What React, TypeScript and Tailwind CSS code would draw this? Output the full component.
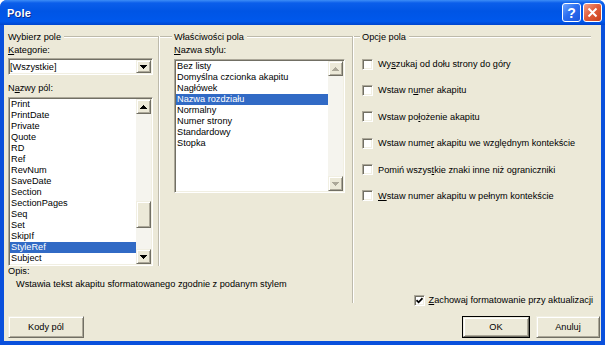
const sunken =
  "border border-t-[#ACA899] border-l-[#ACA899] border-b-white border-r-white shadow-[inset_1px_1px_0_#716F64,inset_-1px_-1px_0_#F1EFE2]";
const raised =
  "border border-t-[#F1EFE2] border-l-[#F1EFE2] border-b-[#716F64] border-r-[#716F64] shadow-[inset_1px_1px_0_#ffffff,inset_-1px_-1px_0_#ACA899]";

const fields = [
  "Print",
  "PrintDate",
  "Private",
  "Quote",
  "RD",
  "Ref",
  "RevNum",
  "SaveDate",
  "Section",
  "SectionPages",
  "Seq",
  "Set",
  "SkipIf",
  "StyleRef",
  "Subject",
];

const styles = [
  "Bez listy",
  "Domyślna czcionka akapitu",
  "Nagłówek",
  "Nazwa rozdziału",
  "Normalny",
  "Numer strony",
  "Standardowy",
  "Stopka",
];

function Arrow({ up, disabled }: { up?: boolean; disabled?: boolean }) {
  return (
    <svg width="7" height="4" viewBox="0 0 7 4" shapeRendering="crispEdges">
      <path
        d={up ? "M3 0h1v1H3zM2 1h3v1H2zM1 2h5v1H1zM0 3h7v1H0z" : "M0 0h7v1H0zM1 1h5v1H1zM2 2h3v1H2zM3 3h1v1H3z"}
        fill={disabled ? "#ACA899" : "#000000"}
      />
    </svg>
  );
}

function ScrollBtn({ up, disabled }: { up?: boolean; disabled?: boolean }) {
  return (
    <div className={`flex h-[15px] w-[15px] shrink-0 items-center justify-center bg-[#ECE9D8] ${raised}`}>
      <Arrow up={up} disabled={disabled} />
    </div>
  );
}

function HLine({ className = "" }: { className?: string }) {
  return <div className={`h-[2px] border-t border-t-[#BDBAAB] border-b border-b-white ${className}`} />;
}

function VLine({ className = "" }: { className?: string }) {
  return <div className={`w-[2px] shrink-0 border-l border-l-[#BDBAAB] border-r border-r-white ${className}`} />;
}

function Check({ checked }: { checked?: boolean }) {
  return (
    <span className={`flex h-[11px] w-[11px] shrink-0 items-center justify-center bg-white ${sunken}`}>
      {checked && (
        <svg width="7" height="7" viewBox="0 0 7 7">
          <path d="M0.5 3.2 L2.6 5.3 L6.5 1.2" stroke="#000" strokeWidth="1.7" fill="none" />
        </svg>
      )}
    </span>
  );
}

function Btn({ children, w, def }: { children: React.ReactNode; w: string; def?: boolean }) {
  return (
    <div className={`${w} h-[22px] ${def ? "border border-black" : ""}`}>
      <div className={`flex h-full w-full items-center justify-center bg-[#ECE9D8] ${raised}`}>{children}</div>
    </div>
  );
}

function Option({ children }: { children: React.ReactNode }) {
  return (
    <div className="flex h-[12px] items-center gap-[5px]">
      <Check />
      <span>{children}</span>
    </div>
  );
}

export default function App() {
  return (
    <div className="h-[345px] w-[605px] overflow-hidden bg-white">
      <div className="flex h-full w-full flex-col rounded-t-[7px] bg-[#0A50DC] font-['Liberation_Sans',Arial,sans-serif] text-[9.2px] leading-[12px] text-black">
        {/* title bar */}
        <div className="flex h-[25px] shrink-0 items-center rounded-t-[7px] bg-[linear-gradient(180deg,#3D8DF7_0%,#0B5EEA_12%,#0055E5_45%,#0058EC_85%,#0045CE_100%)] pl-[7px] pr-[3px]">
          <span className="flex-1 text-[11px] font-bold tracking-[0.2px] text-white [text-shadow:1px_1px_0_#0A2A8A]">
            Pole
          </span>
          <div className="flex h-[19px] w-[19px] items-center justify-center rounded-[3px] border border-white bg-[linear-gradient(135deg,#6FA6FF_0%,#2D6FF0_45%,#1A55DC_100%)] text-[14px] font-bold leading-none text-white">
            ?
          </div>
          <div className="ml-[2px] flex h-[19px] w-[19px] items-center justify-center rounded-[3px] border border-white bg-[linear-gradient(135deg,#F4A088_0%,#E2603D_45%,#C7401C_100%)]">
            <svg width="11" height="11" viewBox="0 0 11 11">
              <path d="M1.5 1.5 L9.5 9.5 M9.5 1.5 L1.5 9.5" stroke="#fff" strokeWidth="2" />
            </svg>
          </div>
        </div>

        {/* body */}
        <div className="mx-[4px] mb-[4px] flex flex-1 flex-col bg-[#ECE9D8]">
          <div className="flex h-[281px]">
            <div className="flex w-[348px] flex-col pt-[6px]">
              <div className="flex h-[235px]">
                {/* Wybierz pole */}
                <div className="flex w-[154px] flex-col">
                  <div className="flex h-[12px] items-center pl-[4px]">
                    <span>Wybierz pole</span>
                    <HLine className="ml-[3px] flex-1" />
                  </div>
                  <div className="mt-[1px] h-[12px] pl-[4px]">
                    <u>K</u>ategorie:
                  </div>
                  <div className={`ml-[4px] mt-[2px] flex h-[17px] w-[145px] bg-white ${sunken}`}>
                    <div className="flex flex-1 items-center pl-[1px] pt-[1px]">[Wszystkie]</div>
                    <div className="py-[1px] pr-[1px]">
                      <div className={`flex h-full w-[15px] items-center justify-center bg-[#ECE9D8] ${raised}`}>
                        <Arrow />
                      </div>
                    </div>
                  </div>
                  <div className="mt-[7px] h-[12px] pl-[4px]">
                    N<u>a</u>zwy pól:
                  </div>
                  <div className={`ml-[4px] mt-[3px] flex h-[169px] w-[145px] bg-white p-[1px] ${sunken}`}>
                    <div className="flex flex-1 flex-col leading-[11px]">
                      {fields.map((f) => (
                        <div
                          key={f}
                          className={`h-[11px] pl-[1px] ${f === "StyleRef" ? "bg-[#316AC5] text-white" : ""}`}
                        >
                          {f}
                        </div>
                      ))}
                    </div>
                    <div className="flex w-[15px] flex-col bg-[#F5F4EE]">
                      <ScrollBtn up />
                      <div className="flex-1">
                        <div className="h-[87px]" />
                        <div className={`h-[27px] w-[15px] bg-[#ECE9D8] ${raised}`} />
                      </div>
                      <ScrollBtn />
                    </div>
                  </div>
                </div>

                <VLine className="mt-[5px]" />

                {/* Właściwości pola */}
                <div className="flex flex-1 flex-col">
                  <div className="flex h-[12px] items-center">
                    <HLine className="w-[12px]" />
                    <span className="ml-[2px]">Właściwości pola</span>
                    <HLine className="ml-[3px] flex-1" />
                  </div>
                  <div className="mt-[1px] h-[12px] pl-[14px]">
                    <u>N</u>azwa stylu:
                  </div>
                  <div className={`ml-[14px] mt-[3px] flex h-[134px] w-[171px] bg-white p-[1px] ${sunken}`}>
                    <div className="flex flex-1 flex-col leading-[11px]">
                      {styles.map((s) => (
                        <div
                          key={s}
                          className={`h-[11px] pl-[1px] ${s === "Nazwa rozdziału" ? "bg-[#316AC5] text-white" : ""}`}
                        >
                          {s}
                        </div>
                      ))}
                    </div>
                    <div className="flex w-[15px] flex-col bg-[#F5F4EE]">
                      <ScrollBtn up disabled />
                      <div className="flex-1" />
                      <ScrollBtn disabled />
                    </div>
                  </div>
                </div>
              </div>

              <div className="h-[11px] pl-[4px] leading-[11px]">Opis:</div>
              <div className="mt-[1px] h-[12px] pl-[12px]">
                Wstawia tekst akapitu sformatowanego zgodnie z podanym stylem
              </div>
            </div>

            <VLine className="mb-[3px] mt-[11px]" />

            {/* Opcje pola */}
            <div className="flex flex-1 flex-col pt-[6px]">
              <div className="flex h-[12px] items-center pr-[10px]">
                <HLine className="w-[6px]" />
                <span className="ml-[2px]">Opcje pola</span>
                <HLine className="ml-[3px] flex-1" />
              </div>
              <div className="mt-[15px] flex flex-col gap-[14.4px] pl-[8px]">
                <Option>
                  Wy<u>s</u>zukaj od dołu strony do góry
                </Option>
                <Option>
                  Wstaw n<u>u</u>mer akapitu
                </Option>
                <Option>
                  Wstaw po<u>ł</u>ożenie akapitu
                </Option>
                <Option>
                  Wstaw nume<u>r</u> akapitu we względnym kontekście
                </Option>
                <Option>
                  Pomiń wszys<u>t</u>kie znaki inne niż ograniczniki
                </Option>
                <Option>
                  <u>W</u>staw numer akapitu w pełnym kontekście
                </Option>
              </div>
              <div className="flex-1" />
              <div className="flex h-[12px] items-center justify-end gap-[4px] pr-[8px]">
                <Check checked />
                <span>
                  <u>Z</u>achowaj formatowanie przy aktualizacji
                </span>
              </div>
            </div>
          </div>

          {/* buttons */}
          <div className="mt-[10px] flex h-[22px] items-start">
            <div className="ml-[4px]">
              <Btn w="w-[76px]">Kody pól</Btn>
            </div>
            <div className="flex-1" />
            <Btn w="w-[68px]" def>
              OK
            </Btn>
            <div className="ml-[6px] mr-[1px]">
              <Btn w="w-[64px]">Anuluj</Btn>
            </div>
          </div>
        </div>
      </div>
    </div>
  );
}
